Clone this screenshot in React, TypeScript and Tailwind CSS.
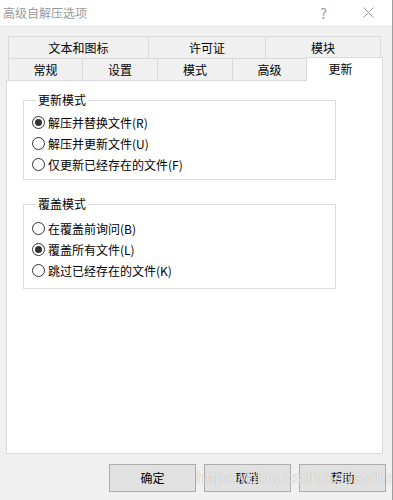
type RadioItem = {
  label: string;
  key: string;
  checked?: boolean;
};

const updateModes: RadioItem[] = [
  { label: "解压并替换文件", key: "(R)", checked: true },
  { label: "解压并更新文件", key: "(U)" },
  { label: "仅更新已经存在的文件", key: "(F)" },
];

const overwriteModes: RadioItem[] = [
  { label: "在覆盖前询问", key: "(B)" },
  { label: "覆盖所有文件", key: "(L)", checked: true },
  { label: "跳过已经存在的文件", key: "(K)" },
];

const Radio = ({ item }: { item: RadioItem }) => {
  return (
    <div className="flex h-[21px] items-center gap-[3px]">
      <span className="flex h-[13px] w-[13px] items-center justify-center rounded-full border border-[#333333] bg-white">
        {item.checked && (
          <span className="h-[7px] w-[7px] rounded-full bg-[#333333]" />
        )}
      </span>
      <span className="text-[12px] leading-none text-black">
        {item.label}
        {item.key}
      </span>
    </div>
  );
};

type GroupProps = {
  title: string;
  items: RadioItem[];
  className: string;
};

const Group = ({ title, items, className }: GroupProps) => {
  return (
    <fieldset
      className={`ml-[16px] w-[313px] border border-[#dcdcdc] pl-[8px] ${className}`}
    >
      <legend className="ml-[4px] px-[2px] text-[12px] leading-[16px] text-black">
        {title}
      </legend>
      {items.map((v) => (
        <Radio key={v.label} item={v} />
      ))}
    </fieldset>
  );
};

const Tab = ({ label, width }: { label: string; width: string }) => {
  return (
    <div
      className={`flex h-full items-center justify-center border-t border-l border-[#d9d9d9] text-[12px] text-black ${width}`}
    >
      {label}
    </div>
  );
};

const Button = ({ label }: { label: string }) => {
  return (
    <div className="flex h-[28px] w-[87px] items-center justify-center border border-[#adadad] bg-[#e1e1e1] text-[12px] text-black">
      {label}
    </div>
  );
};

export default function App() {
  return (
    <div className="relative flex h-[500px] w-[393px] flex-col overflow-hidden border-r border-[#9d9d9d] bg-[#f0f0f0] font-['Noto_Sans_CJK_SC',sans-serif]">
      {/* title bar */}
      <div className="flex h-[25px] items-center bg-white pl-[3px] text-[12px] text-[#9a9a9a]">
        <span className="flex-1">高级自解压选项</span>
        <span className="mr-[36px] text-[14px] leading-none">?</span>
        <svg width="11" height="11" viewBox="0 0 11 11" className="mr-[18px]">
          <path d="M0.5 0.5 L10.5 10.5 M10.5 0.5 L0.5 10.5" stroke="#9a9a9a" strokeWidth="1" />
        </svg>
      </div>

      <div className="pt-[11px] pl-[6px]">
        <div className="ml-[2px] flex h-[22px]">
          <Tab label="文本和图标" width="w-[140px]" />
          <Tab label="许可证" width="w-[117px]" />
          <div className="flex h-full w-[116px] items-center justify-center border-t border-r border-l border-[#d9d9d9] text-[12px] text-black">
            模块
          </div>
        </div>
        <div className="ml-[2px] flex h-[22px] items-start">
          <Tab label="常规" width="w-[74px]" />
          <Tab label="设置" width="w-[75px]" />
          <Tab label="模式" width="w-[75px]" />
          <Tab label="高级" width="w-[74px]" />
          <div className="relative z-10 -mt-px flex h-[24px] w-[77px] items-start justify-center border-t border-r border-l border-[#d9d9d9] bg-white pt-[2px] pr-[8px] text-[12px] text-black">
            更新
          </div>
        </div>
        <div className="flex h-[374px] w-[377px] flex-col border border-[#d9d9d9] bg-white">
          <Group title="更新模式" items={updateModes} className="mt-[11px] pt-[4px] pb-[4px]" />
          <Group title="覆盖模式" items={overwriteModes} className="mt-[16px] pt-[6px] pb-[7px]" />
        </div>
      </div>

      <div className="mt-[10px] flex gap-[8px] pl-[109px]">
        <Button label="确定" />
        <Button label="取消" />
        <Button label="帮助" />
      </div>

      {/* watermark */}
      <span className="absolute top-[466px] left-[196px] font-['Liberation_Sans',sans-serif] text-[17px] leading-[24px] text-white/80 [text-shadow:0_0_1px_rgba(0,0,0,0.35)]">
        https://blog.csdn.net/syrhz
      </span>
    </div>
  );
}
